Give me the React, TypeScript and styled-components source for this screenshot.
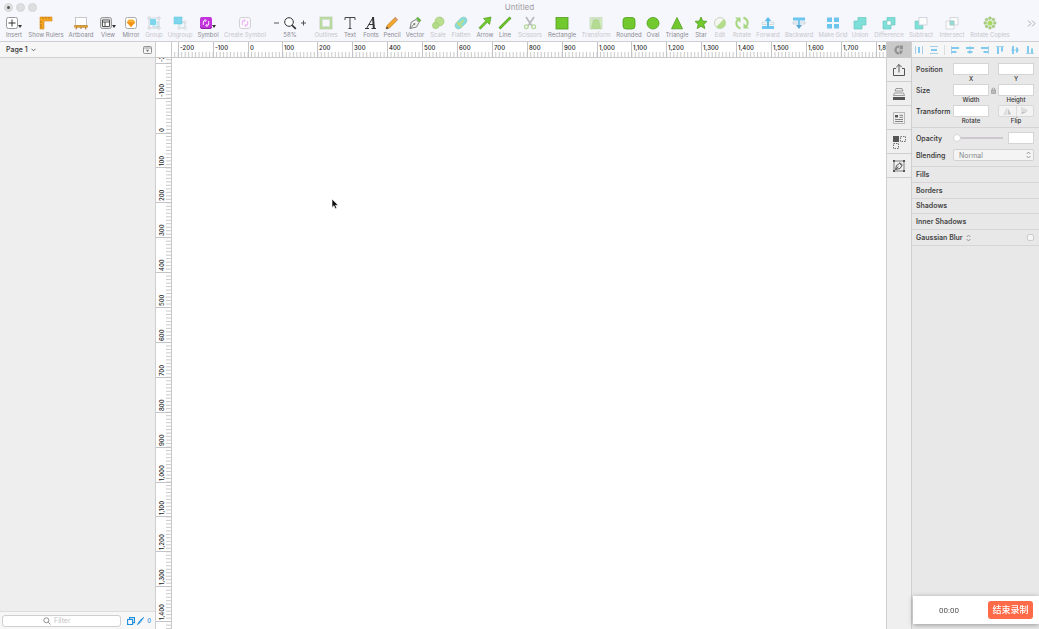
import React, { useLayoutEffect, useRef, useState } from "react";
import styled, { createGlobalStyle } from "styled-components";

const GlobalStyle = createGlobalStyle`
  *, *::before, *::after { box-sizing: border-box; }
  body { margin: 0; font-family: Inter, "Noto Sans CJK SC", sans-serif; font-size: 7px; color: #333; }
  button, input, select { font: inherit; color: inherit; margin: 0; padding: 0; }
  h1, h2, p { margin: 0; font: inherit; }
  svg { display: block; flex: none; }
`;

/* ---------- window ---------- */

const Window = styled.div`
  display: flex;
  flex-direction: column;
  height: 100vh;
  background: #fff;
  overflow: hidden;
`;

const Header = styled.header`
  flex: none;
  height: 42px;
  background: #f6f6fd;
  border-bottom: 1px solid #d0d0d4;
`;

const TitleBar = styled.div`
  display: grid;
  grid-template-columns: 1fr auto 1fr;
  align-items: center;
  height: 14px;
  padding: 0 4px;
`;

const Lights = styled.div`
  display: flex;
  gap: 3px;
`;

const Light = styled.button`
  display: grid;
  place-items: center;
  width: 9px;
  height: 9px;
  border: 1px solid #d6d6d8;
  border-radius: 50%;
  background: #dedee0;
`;

const Dot = styled.span`
  width: 3px;
  height: 3px;
  border-radius: 50%;
  background: #555;
`;

const Title = styled.h1`
  font-size: 8px;
  line-height: 10px;
  color: #a0a0a4;
`;

const Toolbar = styled.nav`
  display: flex;
  padding: 2px 2px 0 4px;
`;

const ToolButton = styled.button<{ $width: number; $dim?: boolean }>`
  display: flex;
  flex: none;
  flex-direction: column;
  align-items: center;
  width: ${(p) => p.$width}px;
  border: 0;
  background: none;
  font-size: 6px;
  line-height: 8px;
  white-space: nowrap;
  color: ${(p) => (p.$dim ? "#c6c6ca" : "#8c8c91")};
`;

const ToolIcon = styled.span`
  display: flex;
  align-items: flex-end;
  height: 15px;
  padding-bottom: 1px;
`;

const MenuMark = styled.span`
  margin-bottom: 2px;
  border: 2px solid transparent;
  border-top: 3px solid #333;
  border-bottom: 0;
`;

const MoreButton = styled.button`
  display: grid;
  place-items: center;
  width: 12px;
  height: 14px;
  margin-left: auto;
  border: 0;
  background: none;
`;

const Body = styled.div`
  display: flex;
  flex: 1;
  min-height: 0;
`;

/* ---------- layer list ---------- */

const Sidebar = styled.aside`
  display: flex;
  flex: none;
  flex-direction: column;
  width: 156px;
  background: #eee;
  border-right: 1px solid #cfcfcf;
`;

const PageBar = styled.div`
  display: flex;
  align-items: center;
  justify-content: space-between;
  height: 16px;
  padding: 0 3px 0 6px;
  background: #f6f6f7;
  border-bottom: 1px solid #d0d0d0;
`;

const PlainButton = styled.button`
  display: flex;
  flex: none;
  align-items: center;
  gap: 3px;
  border: 0;
  background: none;
  font-weight: 500;
`;

const LayerList = styled.div`
  flex: 1;
`;

const FilterBar = styled.div`
  display: flex;
  align-items: center;
  gap: 2px;
  height: 18px;
  padding: 0 4px 0 2px;
  background: #f7f7f8;
  border-top: 1px solid #ddd;
  font-size: 6px;
  color: #1d8fe0;
`;

const SearchBox = styled.label`
  display: flex;
  flex: 1;
  align-items: center;
  gap: 3px;
  min-width: 0;
  height: 12px;
  margin-right: 4px;
  padding-left: 40px;
  border: 1px solid #cfcfcf;
  border-radius: 3px;
  background: #fff;
  font-size: 7px;
`;

const SearchInput = styled.input`
  flex: 1;
  width: 0;
  min-width: 0;
  height: 10px;
  border: 0;
  outline: 0;
  background: none;
  &::placeholder { color: #c4c4c4; opacity: 1; }
`;

/* ---------- canvas ---------- */

const CanvasArea = styled.main`
  position: relative;
  display: grid;
  flex: 1;
  grid-template: 16px 1fr / 16px 1fr;
  min-width: 0;
  background: #fff;
`;

const Corner = styled.div`
  border-right: 1px solid #c8c8c8;
  border-bottom: 1px solid #c8c8c8;
`;

const TopRuler = styled.svg`
  width: 100%;
  height: 16px;
  border-bottom: 1px solid #c8c8c8;
`;

const SideRuler = styled.svg`
  width: 16px;
  height: 100%;
  border-right: 1px solid #c8c8c8;
`;

const RulerText = styled.text`
  font-size: 6px;
  font-weight: 500;
  fill: #222;
`;

const Cursor = styled.svg`
  position: absolute;
  left: 175px;
  top: 156px;
`;

/* ---------- plugin strip ---------- */

const Strip = styled.nav`
  flex: none;
  width: 26px;
  background: #efefef;
  border-left: 1px solid #cfcfcf;
  border-right: 1px solid #cfcfcf;
`;

const StripHead = styled.button`
  display: grid;
  place-items: center;
  width: 100%;
  height: 16px;
  border: 0;
  background: #c9c9c9;
`;

const StripButton = styled.button`
  display: grid;
  place-items: center;
  width: 100%;
  height: 24px;
  border: 0;
  border-bottom: 1px solid #cfcfcf;
  background: none;
`;

/* ---------- inspector ---------- */

const Inspector = styled.aside`
  flex: none;
  width: 127px;
  background: #e8e8e8;
`;

const AlignBar = styled.div`
  display: flex;
  align-items: center;
  justify-content: space-between;
  height: 16px;
  padding: 0 4px 0 2px;
  background: #f6f6f7;
  border-bottom: 1px solid #d0d0d0;
`;

const AlignButton = styled.button`
  border: 0;
  background: none;
`;

const AlignDivider = styled.span`
  width: 1px;
  height: 10px;
  background: #dcdcdc;
`;

const Geometry = styled.div`
  display: flex;
  flex-direction: column;
  gap: 1px;
  padding: 5px 5px 2px 4px;
`;

const FieldRow = styled.div`
  display: grid;
  grid-template-columns: 37px 36px 9px 36px;
  height: 20px;
  line-height: 8px;
`;

const RowLabel = styled.span`
  padding-top: 3px;
  font-weight: 500;
  line-height: 8px;
`;

const Field = styled.label`
  display: flex;
  flex-direction: column;
  align-items: center;
  font-size: 6px;
  font-weight: 500;
`;

const TextInput = styled.input`
  width: 100%;
  height: 12px;
  border: 1px solid #d5d5d5;
  background: #fff;
  outline: 0;
`;

const LockCell = styled.span`
  display: grid;
  place-items: center;
  height: 12px;
`;

const FlipGroup = styled.div`
  display: flex;
  width: 100%;
  height: 12px;
  border: 1px solid #d8d8d8;
  border-radius: 2px;
  background: #f3f3f3;
`;

const FlipButton = styled.button`
  display: grid;
  flex: 1;
  place-items: center;
  border: 0;
  background: none;
  & + & { border-left: 1px solid #ddd; }
`;

const Appearance = styled.div`
  display: flex;
  flex-direction: column;
  gap: 5px;
  padding: 4px 5px 5px 4px;
  border-top: 1px solid #d6d2d6;
`;

const AppearanceRow = styled.div`
  display: flex;
  align-items: center;
  height: 12px;
`;

const AppearanceLabel = styled.label`
  width: 37px;
  font-weight: 500;
`;

const Slider = styled.input`
  appearance: none;
  width: 50px;
  height: 8px;
  margin-right: 5px;
  background: linear-gradient(#cdc8cd, #cdc8cd) center / 100% 2px no-repeat;
  &::-webkit-slider-thumb {
    appearance: none;
    width: 8px;
    height: 8px;
    border: 1px solid #d5d5d5;
    border-radius: 50%;
    background: #fff;
  }
`;

const OpacityInput = styled(TextInput)`
  flex: 1;
  width: auto;
  min-width: 0;
`;

const SelectWrap = styled.span`
  display: flex;
  flex: 1;
  align-items: center;
  height: 12px;
  padding-right: 2px;
  border: 1px solid #d2d2d2;
  border-radius: 2px;
  background: #f4f4f4;
`;

const Select = styled.select`
  appearance: none;
  flex: 1;
  height: 10px;
  padding-left: 5px;
  border: 0;
  background: none;
  color: #8b8b8b;
`;

const StyleSection = styled.section`
  display: flex;
  align-items: center;
  gap: 3px;
  height: 16px;
  padding: 0 5px 0 4px;
  border-top: 1px solid #d8d4d8;
  &:nth-of-type(3n) { height: 15px; }
`;

const StyleTitle = styled.h2`
  font-weight: 600;
  line-height: 8px;
  color: #444;
`;

const Check = styled.input`
  appearance: none;
  width: 7px;
  height: 7px;
  margin-left: auto;
  border: 1px solid #ccc;
  border-radius: 2px;
  background: #f6f6f6;
`;

const PanelEnd = styled.div`
  border-top: 1px solid #d8d4d8;
`;

/* ---------- recorder ---------- */

const Recorder = styled.div`
  position: fixed;
  right: 0;
  bottom: 5px;
  display: flex;
  align-items: center;
  justify-content: space-between;
  width: 126px;
  height: 28px;
  padding: 0 6px 0 26px;
  background: #fff;
  box-shadow: 0 1px 5px rgba(0, 0, 0, 0.35);
`;

const Elapsed = styled.time`
  font-family: Roboto, sans-serif;
  font-size: 8px;
  color: #555;
`;

const StopButton = styled.button`
  width: 45px;
  height: 18px;
  border: 0;
  border-radius: 3px;
  background: #ff6a48;
  color: #fff;
  font-size: 9px;
  font-weight: 500;
  line-height: 18px;
`;

/* ---------- icons ---------- */

type IconProps = { w?: number; children: React.ReactNode };
const Icon = ({ w = 14, children }: IconProps) => (
  <svg width={w} height="14" viewBox={`0 0 ${w} 14`} fill="none" aria-hidden="true">
    {children}
  </svg>
);

const green = "#72c92e";
const edge = "#4f9f1c";
const aqua = "#7edfd8";
const blue = "#6cc6ee";

const tools: { name: string; width: number; dim?: boolean; menu?: boolean; w?: number; art: React.ReactNode }[] = [
  { name: "Insert", width: 20, menu: true, w: 12, art: <><rect x=".5" y="1.500" width="11" height="11" rx="2" fill="#fff" stroke="#999" /><path d="M6 3.500v7M2.500 7h7" stroke="#333" /></> },
  { name: "Show Rulers", width: 44, art: <><path d="M1 1h12v4H5v8H1z" fill="#f5a623" stroke="#d68b17" strokeWidth=".6" /><path d="M4 1v2M7 1v2M10 1v2M1 6h2M1 9h2M1 11h2" stroke="#a66a10" strokeWidth=".7" /></> },
  { name: "Artboard", width: 26, w: 14, art: <><path d="M3 10 2 13.500M11 10l1 3.500M7 10v3" stroke="#a87528" /><rect x="1.500" y="1.500" width="11" height="8" fill="#fff" stroke="#bbb" strokeWidth=".8" /><path d="M.5 9.500h13v1.800H.5z" fill="#e8a22e" stroke="#ad7418" strokeWidth=".5" /></> },
  { name: "View", width: 28, menu: true, w: 12, art: <><rect x=".5" y="1.500" width="11" height="11" rx="2" fill="#ddd" stroke="#999" /><path d="M2.500 4h7v6.500h-7zM2.500 6h7M5 6v4.500" fill="#fff" stroke="#444" strokeWidth=".9" /></> },
  { name: "Mirror", width: 18, w: 12, art: <><rect x=".5" y="1.500" width="11" height="11" rx="2" fill="#fff" stroke="#aaa" /><path d="M3.700 3.500h4.600L10.300 6.200 6 11 1.700 6.200z" fill="#fbb031" /><path d="M1.700 6.200h8.600L6 11z" fill="#f5921a" /></> },
  { name: "Group", width: 28, dim: true, art: <><path d="M2 2h10v10H2z" stroke="#c8d0d6" strokeWidth=".8" /><path d="M1 1h2v2H1zM11 1h2v2h-2zM1 11h2v2H1zM11 11h2v2h-2z" fill="#fff" stroke="#c5c9cc" strokeWidth=".7" /><path d="M6 6h5v5H6z" fill="#dff4f8" stroke="#a5cfda" strokeWidth=".6" /><path d="M3 3h6v6H3z" fill="#7dd6ec" /></> },
  { name: "Ungroup", width: 24, dim: true, art: <><path d="M6 6h6v6H6z" fill="#eef7f9" stroke="#bccbd0" strokeWidth=".7" /><path d="M5 11h2v2H5zM11 5h2v2h-2zM11 11h2v2h-2z" fill="#fff" stroke="#c5c9cc" strokeWidth=".6" /><path d="M1 1h8v7H1z" fill="#7dd6ec" stroke="#5cc0dc" strokeWidth=".5" /></> },
  { name: "Symbol", width: 32, menu: true, w: 12, art: <><rect x="0" y="1" width="12" height="12" rx="2" fill="#c233dc" /><path d="M.5 11q.3 1.500 2 1.500h7q1.700 0 2-1.500" stroke="#8d1fa5" /><path d="M3.300 9V6Q3.300 4.500 5 4.500h.5M4.700 3 6.200 4.500 4.700 6M8.700 5v3q0 1.500-1.700 1.500h-.5M7.300 8 5.800 9.500 7.300 11" stroke="#fff" strokeWidth=".9" /></> },
  { name: "Create Symbol", width: 42, dim: true, w: 12, art: <><rect x=".5" y="1.500" width="11" height="11" rx="2" fill="#fbf7fc" stroke="#ccc" strokeWidth=".9" /><path d="M3.300 9V6Q3.300 4.500 5 4.500h.5M4.700 3 6.200 4.500 4.700 6M8.700 5v3q0 1.500-1.700 1.500h-.5M7.300 8 5.800 9.500 7.300 11" stroke="#e6a9ee" strokeWidth=".9" /></> },
  { name: "58%", width: 48, w: 32, art: <><path d="M0 7h5M27 7h5M29.500 4.500v5" stroke="#444" strokeWidth=".9" /><circle cx="15" cy="6" r="4.300" fill="#fff" stroke="#333" /><path d="m18.200 9.300 3.600 3.500" stroke="#333" strokeWidth="1.700" /></> },
  { name: "Outlines", width: 24, dim: true, art: <><path d="M2 2h10v10H2z" stroke="#b9dc9d" strokeWidth="2" /><path d="M.7.9h12.600v12.200H.7zM3.300 3.500h7.400v7H3.300z" stroke="#b8c9ad" strokeWidth=".5" /></> },
  { name: "Text", width: 24, art: <path d="M2 4V1.500h10V4M7 1.500v11M5.500 12.500h3" stroke="#444" /> },
  { name: "Fonts", width: 18, art: <><path d="M2.500 12.500 9 1.500M4.700 8.500h5" stroke="#333" /><path d="m9 1.500.9 11" stroke="#333" strokeWidth="2" /><path d="M1 12.500h4M7.500 12.500H12M8 1.500h2" stroke="#333" /></> },
  { name: "Pencil", width: 24, art: <><path d="m1 13 1-3.500L10.300 1.300l2.400 2.400L4.500 12z" fill="#f6a528" stroke="#a97621" strokeWidth=".6" /><path d="m10.300 1.300 2.400 2.400-1.400 1.400L8.900 2.700z" fill="#d99a7a" /><path d="m1 13 .8-2.600 1.800 1.800z" fill="#444" /></> },
  { name: "Vector", width: 22, art: <><path d="M2 12.500 3.300 6 8 3.500l3 3L8.500 11z" fill="#f2f2ee" stroke="#777" strokeWidth=".9" /><path d="m2 12.500 4-4.200" stroke="#666" strokeWidth=".8" /><circle cx="6.300" cy="7.900" r="1" fill="#777" /><path d="m8.300 2.500 1.500-1.300 3 3L11.500 6z" fill="#62b83a" stroke="#438c23" strokeWidth=".5" /></> },
  { name: "Scale", width: 24, dim: true, art: <><circle cx="8.500" cy="5.500" r="4.500" fill="#b9df8e" stroke="#9ec879" strokeWidth=".7" /><circle cx="4.700" cy="9.500" r="3.200" fill="#b4dc87" stroke="#9ec879" strokeWidth=".7" /></> },
  { name: "Flatten", width: 22, dim: true, art: <><path d="M2 7 7 2q3-2 5 0t0 5l-5 5q-3 2-5 0T2 7Z" fill="#85dce2" stroke="#96cbb3" strokeWidth=".7" /><path d="M4 9.500 10 4M3 6l5 5" stroke="#badd8c" strokeWidth="2.300" /></> },
  { name: "Arrow", width: 26, art: <path d="m1 11.700 6.800-6.900L5.500 2.500 13 1l-1.500 7.500-2.200-2.200-6.800 6.900z" fill={green} stroke={edge} strokeWidth=".7" /> },
  { name: "Line", width: 14, art: <><path d="M1.500 12.500 12.500 1.500" stroke={edge} strokeWidth="2.600" /><path d="m2 12 10-10" stroke={green} strokeWidth="1.300" /></> },
  { name: "Scissors", width: 36, dim: true, art: <><path d="m3 1 6 9M11 1 5 10" stroke="#b9b9bd" strokeWidth="1.700" /><circle cx="3.300" cy="10.800" r="1.900" stroke="#b3d996" strokeWidth="1.200" /><circle cx="10.700" cy="10.800" r="1.900" stroke="#b3d996" strokeWidth="1.200" /></> },
  { name: "Rectangle", width: 28, art: <rect x="1" y="1.500" width="12" height="11.500" fill={green} stroke={edge} strokeWidth=".8" /> },
  { name: "Transform", width: 40, dim: true, art: <><path d="M1 1.500h12v11.500H1z" fill="#d2ecc0" stroke="#c0d8b0" strokeWidth=".6" /><path d="M4.500 3.500h5l2 9h-9z" fill="#b3dc90" stroke="#a9cb91" strokeWidth=".6" /><path d="M3.700 2.500h1.600v1.600H3.700zM8.700 2.500h1.600v1.600H8.700z" fill="#fff" stroke="#b4c5a9" strokeWidth=".5" /></> },
  { name: "Rounded", width: 26, art: <rect x="1" y="1.500" width="12" height="11.500" rx="3" fill={green} stroke={edge} strokeWidth=".8" /> },
  { name: "Oval", width: 22, art: <ellipse cx="7" cy="7.200" rx="6" ry="5.800" fill={green} stroke={edge} strokeWidth=".8" /> },
  { name: "Triangle", width: 26, art: <path d="m7 1.500 5.500 11.300h-11z" fill={green} stroke={edge} strokeWidth=".8" /> },
  { name: "Star", width: 22, art: <path d="m7 1 1.700 4 4.300.4-3.200 2.900 1 4.300L7 10.300l-3.800 2.300 1-4.300L1 5.400 5.300 5z" fill={green} stroke={edge} strokeWidth=".8" /> },
  { name: "Edit", width: 16, dim: true, art: <><circle cx="7" cy="7" r="5.500" fill="#f4f7f1" stroke="#bccab2" strokeWidth=".8" /><path d="M11 3.100A5.500 5.500 0 0 1 3.100 11z" fill="#b4dd8b" /></> },
  { name: "Rotate", width: 28, dim: true, w: 16, art: <><path d="M6.500 12.500Q1 10 2.800 5L4 3.500M9.500 1.500q5.500 2.500 3.700 7.500L12 10.500" stroke="#a6d781" strokeWidth="2" /><path d="M1 1.500h5.500V7zM15 12.500H9.500V7z" fill="#a6d781" /></> },
  { name: "Forward", width: 24, dim: true, art: <><path d="M1 6h12v2.500H1z" fill="#edf4f7" stroke="#c4cdd2" strokeWidth=".6" /><path d="M1 10h12v3H1z" fill={blue} /><path d="M7 11V3" stroke="#59bce8" strokeWidth="1.800" /><path d="M3.800 5 7 1l3.200 4z" fill="#59bce8" /></> },
  { name: "Backward", width: 38, dim: true, art: <><path d="M1 1.500h12v3H1z" fill={blue} /><path d="M1 6h12v2H1z" fill="#edf4f7" stroke="#b7c5cb" strokeWidth=".6" /><path d="M7 4v6" stroke="#59bce8" strokeWidth="1.500" /><path d="M4 9h6l-3 4z" fill="#59a9cf" /></> },
  { name: "Make Grid", width: 30, dim: true, art: <path d="M1 1.500h5v4.500H1zM8 1.500h5v4.500H8zM1 8h5v4.500H1zM8 8h5v4.500H8z" fill={blue} /> },
  { name: "Union", width: 24, dim: true, art: <path d="M5 1.500h8V9H9v4H1V5h4z" fill={aqua} stroke="#68c8c2" strokeWidth=".7" /> },
  { name: "Difference", width: 34, dim: true, art: <><path d="M5 1.500h8V9H9v4H1V5h4z" fill={aqua} stroke="#68c8c2" strokeWidth=".7" /><path d="M5 5h4v4H5z" fill="#fff" stroke="#8cc9c5" strokeWidth=".6" /></> },
  { name: "Subtract", width: 30, dim: true, art: <><path d="M1 5h8v8H1z" fill={aqua} stroke="#77cbc5" strokeWidth=".6" /><path d="M5 1.500h8V9H5z" fill="#fcfcfd" stroke="#c9cdd0" strokeWidth=".8" /></> },
  { name: "Intersect", width: 32, dim: true, art: <><path d="M5 1.500h8V9H5zM1 5h8v8H1z" fill="#fcfcfd" stroke="#cdd0d3" strokeWidth=".8" /><path d="M5 5h4v4H5z" fill="#90ddd8" stroke="#a4c8c6" strokeWidth=".7" /></> },
  { name: "Rotate Copies", width: 44, dim: true, art: <><circle cx="7" cy="7" r="2.600" fill="#aada66" /><g fill="#a9d07f" stroke="#94bd6f" strokeWidth=".4"><circle cx="7" cy="2.200" r="1.400" /><circle cx="10.400" cy="3.600" r="1.400" /><circle cx="11.800" cy="7" r="1.400" /><circle cx="10.400" cy="10.400" r="1.400" /><circle cx="7" cy="11.800" r="1.400" /><circle cx="3.600" cy="10.400" r="1.400" /><circle cx="2.200" cy="7" r="1.400" /><circle cx="3.600" cy="3.600" r="1.400" /></g></> },
];

const UpDown = () => (
  <svg width="5" height="8" viewBox="0 0 5 8" fill="none" stroke="#888" strokeWidth=".8" aria-hidden="true">
    <path d="M.7 3 2.500 1l1.800 2M.7 5l1.800 2 1.800-2" />
  </svg>
);

const alignIcons: { name: string; line: string; bar: string }[] = [
  { name: "Distribute horizontally", line: "M1.500 1v8M8.500 1v8", bar: "M4 2h2v6H4z" },
  { name: "Distribute vertically", line: "M1 1.500h8M1 8.500h8", bar: "M2 4h6v2H2z" },
  { name: "Align left", line: "M1.500 1v8", bar: "M2 2h7v2H2zM2 6h4.500v2H2z" },
  { name: "Align center", line: "M5 1v8", bar: "M1 2h8v2H1zM2.500 6h5v2h-5z" },
  { name: "Align right", line: "M8.500 1v8", bar: "M1 2h7v2H1zM3.500 6H8v2H3.500z" },
  { name: "Align top", line: "M1 1.500h8", bar: "M2 2h2v7H2zM6 2h2v4.500H6z" },
  { name: "Align middle", line: "M1 5h8", bar: "M2 1h2v8H2zM6 2.500h2v5H6z" },
  { name: "Align bottom", line: "M1 8.500h8", bar: "M2 1h2v7H2zM6 3.500h2V8H6z" },
];

const stripIcons: { name: string; art: React.ReactNode }[] = [
  { name: "Export", art: <><path d="M4 5.500H1.500v7h11v-7H10" /><path d="M7 9.500V1.500M4.300 4.200 7 1.500l2.700 2.700" /></> },
  { name: "Stack", art: <><path d="M4 1.500h6l1 2.500H3zM2.500 6h9l1 2.500h-11z" strokeWidth=".7" stroke="#777" /><path d="M1 10h12v3H1z" fill="#555" stroke="none" /></> },
  { name: "Properties", art: <><path d="M1.500 1.500h11v11h-11z" stroke="#aaa" strokeWidth=".8" /><path d="M3 4h3v2.500H3z" fill="#555" stroke="none" /><path d="M7.500 4.300H11M7.500 6.300H11M3 8.500h8M3 10.500h8" strokeWidth=".7" /></> },
  { name: "Components", art: <><path d="M1 1h6v6H1z" fill="#555" stroke="none" /><path d="M8.500 1.500h5v5h-5zM1.500 8.500h5v5h-5z" strokeWidth=".8" strokeDasharray="1.500 1" /></> },
  { name: "Edit shape", art: <><path d="M2 2h10v10H2z" strokeWidth=".7" /><path d="M1 1h2v2H1zM11 1h2v2h-2zM1 11h2v2H1zM11 11h2v2h-2z" fill="#555" stroke="none" /><path d="m3.500 10.500 1-4L7.500 4.500l2.500 2-2 3zM7.500 3.500l3 2.500M3.500 10.500 6.300 7.500" /></> },
];

/* ---------- rulers ---------- */

const STEP = 34.9;

/* Tracks the drawn length of a ruler so only the visible part is rendered. */
function useLength(axis: "width" | "height") {
  const ref = useRef<SVGSVGElement>(null);
  const [length, setLength] = useState(0);
  useLayoutEffect(() => {
    const node = ref.current;
    if (!node) return;
    const measure = () => setLength(node.getBoundingClientRect()[axis]);
    measure();
    const observer = new ResizeObserver(measure);
    observer.observe(node);
    return () => observer.disconnect();
  }, [axis]);
  return { ref, length };
}

function marks(origin: number, length: number, step: number) {
  const first = Math.ceil(-origin / step);
  const last = Math.floor((length - origin) / step);
  return Array.from({ length: Math.max(0, last - first + 1) }, (_, i) => first + i);
}

const HorizontalRuler = ({ origin }: { origin: number }) => {
  const { ref, length } = useLength("width");
  return (
    <TopRuler ref={ref} aria-label="Horizontal ruler">
      <path d={marks(origin, length, STEP / 10).map((n) => `M${(origin + (n * STEP) / 10).toFixed(1)} 10v5`).join("")} stroke="#bdbdbd" strokeWidth=".8" />
      {marks(origin, length, STEP).map((n) => {
        const x = Math.floor(origin + n * STEP);
        return (
          <g key={n}>
            <path d={`M${x + 0.5} 0v15`} stroke="#c4c4c8" />
            <RulerText x={x + 2} y="8">{(n * 100).toLocaleString("en-US")}</RulerText>
          </g>
        );
      })}
    </TopRuler>
  );
};

const VerticalRuler = ({ origin }: { origin: number }) => {
  const { ref, length } = useLength("height");
  return (
    <SideRuler ref={ref} aria-label="Vertical ruler">
      <path d={marks(origin, length, STEP / 10).map((n) => `M10 ${(origin + (n * STEP) / 10).toFixed(1)}h5`).join("")} stroke="#bdbdbd" strokeWidth=".8" />
      {marks(origin, length, STEP).map((n) => {
        const y = Math.floor(origin + n * STEP);
        return (
          <g key={n}>
            <path d={`M0 ${y + 0.5}h15`} stroke="#c4c4c8" />
            <RulerText transform={`translate(8 ${y - 1}) rotate(-90)`}>{(n * 100).toLocaleString("en-US")}</RulerText>
          </g>
        );
      })}
    </SideRuler>
  );
};

const LabeledInput = ({ caption }: { caption: string }) => (
  <Field>
    <TextInput type="text" />
    {caption}
  </Field>
);

export default function App() {
  return (
    <Window>
      <GlobalStyle />
      <Header>
        <TitleBar>
          <Lights>
            <Light aria-label="Close"><Dot /></Light>
            <Light aria-label="Minimize" />
            <Light aria-label="Zoom" />
          </Lights>
          <Title>Untitled</Title>
        </TitleBar>
        <Toolbar>
          {tools.map((t) => (
            <ToolButton key={t.name} $width={t.width} $dim={t.dim}>
              <ToolIcon>
                <Icon w={t.w}>{t.art}</Icon>
                {t.menu && <MenuMark />}
              </ToolIcon>
              {t.name}
            </ToolButton>
          ))}
          <MoreButton aria-label="More tools">
            <svg width="9" height="7" viewBox="0 0 9 7" fill="none" stroke="#aaa" aria-hidden="true"><path d="m1 .5 3 3-3 3M5 .5l3 3-3 3" /></svg>
          </MoreButton>
        </Toolbar>
      </Header>
      <Body>
        <Sidebar>
          <PageBar>
            <PlainButton>
              Page 1
              <svg width="5" height="4" viewBox="0 0 5 4" fill="none" stroke="#555" strokeWidth=".9" aria-hidden="true"><path d="m.5.8 2 2 2-2" /></svg>
            </PlainButton>
            <PlainButton aria-label="Toggle pages">
              <svg width="9" height="8" viewBox="0 0 9 8" fill="none" stroke="#888" aria-hidden="true"><rect x=".5" y=".5" width="8" height="7" rx="1" strokeWidth=".9" /><path d="M1 2h7" strokeWidth=".8" /><path d="M3 3.800h3L4.500 6z" fill="#666" stroke="none" /></svg>
            </PlainButton>
          </PageBar>
          <LayerList />
          <FilterBar>
            <SearchBox>
              <svg width="8" height="8" viewBox="0 0 8 8" fill="none" stroke="#888" strokeWidth=".9" aria-hidden="true"><circle cx="3.300" cy="3.300" r="2.500" /><path d="m5.200 5.200 2.300 2.300" /></svg>
              <SearchInput type="search" placeholder="Filter" aria-label="Filter layers" />
            </SearchBox>
            <PlainButton aria-label="Show slices">
              <svg width="8" height="8" viewBox="0 0 8 8" fill="none" stroke="#1d8fe0" aria-hidden="true"><path d="M2.500 2V.6h5v5H6M.6 2.500h5v5h-5z" strokeWidth="1.100" /></svg>
            </PlainButton>
            <PlainButton aria-label="Sliced layers">
              <svg width="7" height="8" viewBox="0 0 7 8" aria-hidden="true"><path d="M6.800.3 2.900 3.600l1 1zM2.400 4.200.3 7.800l3.200-2.500z" fill="#1d8fe0" stroke="#1d8fe0" strokeWidth=".7" /></svg>
              0
            </PlainButton>
          </FilterBar>
        </Sidebar>
        <CanvasArea>
          <Corner />
          <HorizontalRuler origin={76} />
          <VerticalRuler origin={75} />
          <Cursor width="8" height="12" viewBox="0 0 8 12" aria-hidden="true">
            <path d="M1 1v8.500l2-1.800 1.300 3 1.500-.7-1.300-2.800h2.700z" fill="#111" stroke="#fff" strokeWidth=".6" />
          </Cursor>
        </CanvasArea>
        <Strip>
          <StripHead aria-label="Plugin">
            <svg width="10" height="10" viewBox="0 0 10 10" fill="none" aria-hidden="true"><path d="M5 1.500a3.500 3.500 0 0 0 0 7" stroke="#929292" strokeWidth="2.200" /><path d="M5.500.5H9v3.700H5.500zM5.500 5.500H9L7.500 9h-2z" fill="#929292" /></svg>
          </StripHead>
          {stripIcons.map((s) => (
            <StripButton key={s.name} aria-label={s.name}>
              <svg width="14" height="14" viewBox="0 0 14 14" fill="none" stroke="#555" aria-hidden="true">{s.art}</svg>
            </StripButton>
          ))}
        </Strip>
        <Inspector>
          <AlignBar>
            {alignIcons.map((a, i) => (
              <React.Fragment key={a.name}>
                {i === 2 && <AlignDivider />}
                <AlignButton aria-label={a.name}>
                  <svg width="10" height="10" viewBox="0 0 10 10" fill="none" aria-hidden="true"><path d={a.line} stroke="#9ccbe5" strokeWidth=".9" /><path d={a.bar} fill="#80c9ef" /></svg>
                </AlignButton>
              </React.Fragment>
            ))}
          </AlignBar>
          <Geometry>
            <FieldRow>
              <RowLabel>Position</RowLabel>
              <LabeledInput caption="X" />
              <span />
              <LabeledInput caption="Y" />
            </FieldRow>
            <FieldRow>
              <RowLabel>Size</RowLabel>
              <LabeledInput caption="Width" />
              <LockCell>
                <svg width="5" height="7" viewBox="0 0 5 7" fill="none" stroke="#999" aria-hidden="true"><path d="M1.200 3V1.700q1.300-1.600 2.600 0V3" strokeWidth=".8" /><path d="M.5 3h4v3.500h-4z" fill="#bbb" strokeWidth=".7" /></svg>
              </LockCell>
              <LabeledInput caption="Height" />
            </FieldRow>
            <FieldRow>
              <RowLabel>Transform</RowLabel>
              <LabeledInput caption="Rotate" />
              <span />
              <Field as="div">
                <FlipGroup>
                  <FlipButton aria-label="Flip horizontally"><svg width="9" height="7" viewBox="0 0 9 7" aria-hidden="true"><path d="M4 .5v6H.8z" fill="#e2e2e2" stroke="#ccc" strokeWidth=".5" /><path d="M5 .5v6h3.200z" fill="#c3c3c3" /></svg></FlipButton>
                  <FlipButton aria-label="Flip vertically"><svg width="7" height="8" viewBox="0 0 7 8" aria-hidden="true"><path d="M.5 3.500V.5l6 3z" fill="#e2e2e2" stroke="#ccc" strokeWidth=".5" /><path d="M.5 4.500v3l6-3z" fill="#c3c3c3" /></svg></FlipButton>
                </FlipGroup>
                Flip
              </Field>
            </FieldRow>
          </Geometry>
          <Appearance>
            <AppearanceRow>
              <AppearanceLabel htmlFor="opacity">Opacity</AppearanceLabel>
              <Slider id="opacity" type="range" min="0" max="100" defaultValue="0" />
              <OpacityInput type="text" aria-label="Opacity value" />
            </AppearanceRow>
            <AppearanceRow>
              <AppearanceLabel htmlFor="blending">Blending</AppearanceLabel>
              <SelectWrap>
                <Select id="blending" defaultValue="Normal"><option>Normal</option></Select>
                <UpDown />
              </SelectWrap>
            </AppearanceRow>
          </Appearance>
          {["Fills", "Borders", "Shadows", "Inner Shadows"].map((s) => (
            <StyleSection key={s}><StyleTitle>{s}</StyleTitle></StyleSection>
          ))}
          <StyleSection>
            <StyleTitle>Gaussian Blur</StyleTitle>
            <UpDown />
            <Check type="checkbox" aria-label="Gaussian Blur" />
          </StyleSection>
          <PanelEnd />
        </Inspector>
      </Body>
      <Recorder>
        <Elapsed>00:00</Elapsed>
        <StopButton>结束录制</StopButton>
      </Recorder>
    </Window>
  );
}
